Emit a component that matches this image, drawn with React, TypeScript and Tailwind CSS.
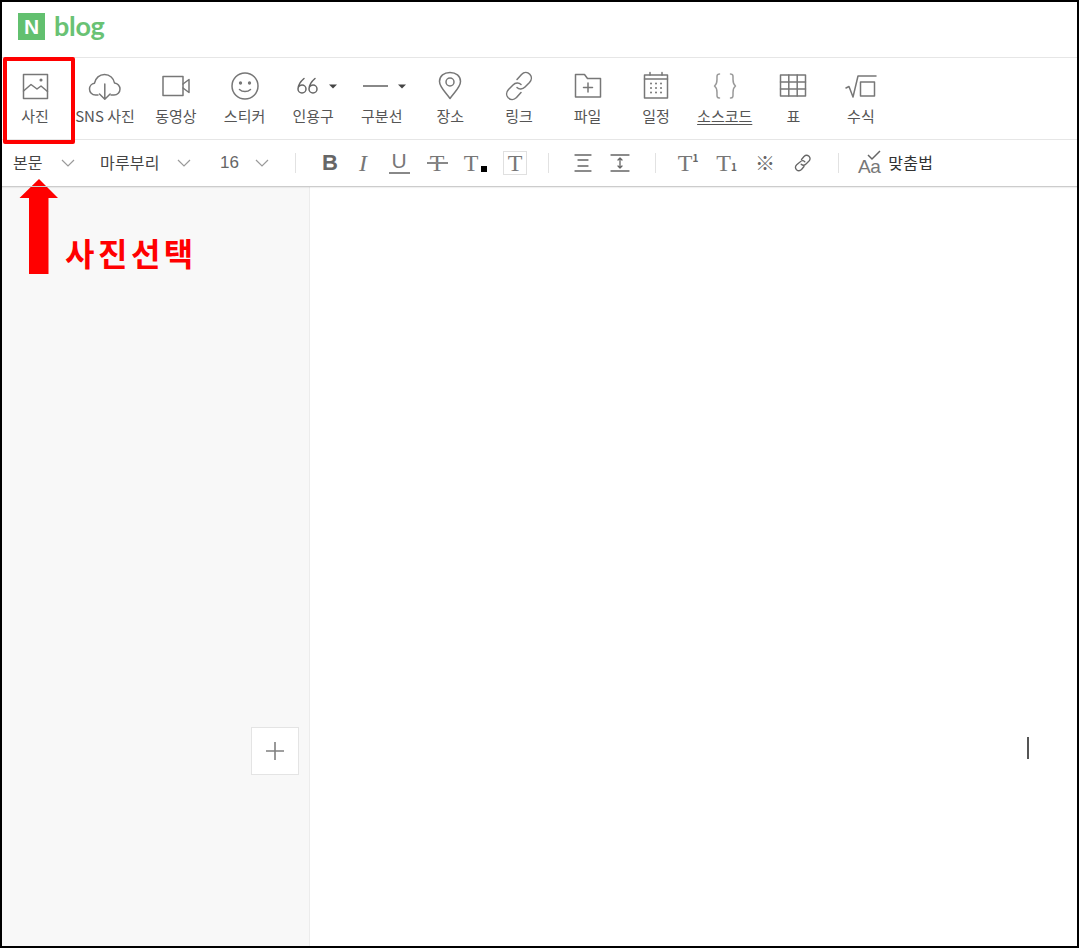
import type { ReactNode } from 'react'

const font = '[font-family:"Noto_Sans_CJK_KR","Noto_Sans",sans-serif]'

const Icon = ({ children, w = 30, h = 30 }: { children: ReactNode; w?: number; h?: number }) => (
  <svg
    width={w}
    height={h}
    viewBox={`0 0 ${w} ${h}`}
    fill="none"
    stroke="#777"
    strokeWidth="1.5"
    strokeLinecap="round"
    strokeLinejoin="round"
  >
    {children}
  </svg>
)

const Caret = () => (
  <svg width="8" height="5" viewBox="0 0 8 5">
    <path d="M0 0.5h8L4 4.5z" fill="#444" />
  </svg>
)

const Chevron = () => (
  <svg width="14" height="8" viewBox="0 0 14 8" fill="none" stroke="#9a9a9a" strokeWidth="1.2">
    <path d="M1 1l6 6 6-6" />
  </svg>
)

const tools: { label: string; icon: ReactNode; underline?: boolean; cls?: string }[] = [
  {
    label: '사진',
    cls: 'ml-[-1.3px]',
    icon: (
      <Icon>
        <rect x="3.5" y="3.5" width="24" height="24" />
        <path d="M3.5 20l7.5-6.5 6 4.5 4-3 6.5 5.5" />
        <circle cx="21" cy="9" r="0.8" fill="#777" />
      </Icon>
    ),
  },
  {
    label: 'SNS 사진',
    cls: 'ml-[1.4px]',
    icon: (
      <Icon w={34}>
        <path d="M10 24H7.500C4 24 1.500 21.300 1.500 18c0-3 2.200-5.400 5-5.800C7.500 7 11.500 3.500 16.500 3.500c5.300 0 9.300 3.800 10 8.500 3.200.2 5.500 3 5.500 6 0 3.300-2.500 6-6 6H23" />
        <path d="M16.800 13v15M11.500 23l5.300 5.300 5.300-5.300" />
      </Icon>
    ),
  },
  {
    label: '동영상',
    cls: 'ml-[2.4px]',
    icon: (
      <Icon w={30}>
        <rect x="2" y="5.500" width="20" height="19" />
        <path d="M22 13l6-4.500v13L22 17" />
      </Icon>
    ),
  },
  {
    label: '스티커',
    icon: (
      <Icon>
        <circle cx="15" cy="15" r="13" />
        <circle cx="10.500" cy="12" r="0.9" fill="#777" />
        <circle cx="19.500" cy="12" r="0.9" fill="#777" />
        <path d="M9.500 18.500c3 2.800 8 2.800 11 0" />
      </Icon>
    ),
  },
  {
    label: '인용구',
    icon: (
      <div className="ml-[6px] flex items-center gap-[11px]">
        <svg width="22" height="18" viewBox="0 0 22 18" fill="none" stroke="#666" strokeWidth="1.500" strokeLinecap="round">
          <path d="M8 1.500C4.500 4.500 2 8 2 12a4 4 0 1 0 4-4c-1.700 0-3 .8-3.500 2" />
          <path d="M19 1.500C15.500 4.500 13 8 13 12a4 4 0 1 0 4-4c-1.700 0-3 .8-3.500 2" />
        </svg>
        <Caret />
      </div>
    ),
  },
  {
    label: '구분선',
    icon: (
      <div className="ml-[5px] flex items-center gap-[10px]">
        <div className="h-[1.500px] w-[25px] bg-[#888]" />
        <Caret />
      </div>
    ),
  },
  {
    label: '장소',
    icon: (
      <Icon w={24}>
        <path d="M12 27.500C7 20.500 1.500 16 1.500 10.500 1.500 5 6 1.500 12 1.500S22.500 5 22.500 10.500C22.500 16 17 20.500 12 27.500z" />
        <circle cx="12" cy="11" r="4" />
      </Icon>
    ),
  },
  {
    label: '링크',
    icon: (
      <Icon w={28}>
        <path d="M12 8.500l4.500-5c2.500-2.500 6-2.500 8.300-.3 2.200 2.300 2 5.800-.3 8.300l-4.500 4.500c-2.500 2.500-6 2.500-8 .5" />
        <path d="M16 21.500l-4.500 5c-2.500 2.500-6 2.500-8.300.3-2.200-2.300-2-5.800.3-8.300L8 14c2.500-2.500 6-2.500 8-.5" />
      </Icon>
    ),
  },
  {
    label: '파일',
    icon: (
      <Icon w={28}>
        <path d="M1.500 26V3.500h9l3 4h13V26z" />
        <path d="M14 12v9M9.500 16.500h9" />
      </Icon>
    ),
  },
  {
    label: '일정',
    icon: (
      <Icon w={26}>
        <rect x="1.500" y="4" width="23" height="23" />
        <path d="M1.500 8h23M7 1.500V4M19 1.500V4" />
        <path
          d="M8 12.500h.01M13 12.500h.01M18 12.500h.01M8 17h.01M13 17h.01M18 17h.01M8 21.500h.01M13 21.500h.01M18 21.500h.01"
          strokeWidth="2"
        />
      </Icon>
    ),
  },
  {
    label: '소스코드',
    underline: true,
    icon: (
      <Icon w={24}>
        <path d="M6.500 3C3.500 3 4 5 4 8.500c0 3.500-.5 5-2.500 6.500 2 1.500 2.500 3 2.500 6.500S3.500 27 6.500 27" stroke="#999" />
        <path d="M17.500 3c3 0 2.500 2 2.500 5.500 0 3.500.5 5 2.500 6.500-2 1.500-2.500 3-2.500 6.500s.5 5.500-2.500 5.500" stroke="#999" />
      </Icon>
    ),
  },
  {
    label: '표',
    icon: (
      <Icon w={28}>
        <rect x="1.500" y="4" width="25" height="21" />
        <path d="M1.500 11h25M1.500 18h25M9.800 4v21M18.200 4v21" />
      </Icon>
    ),
  },
  {
    label: '수식',
    cls: 'ml-[-1px]',
    icon: (
      <Icon w={32}>
        <path d="M1 17l3-1.500 4 10.500L13 5h18" />
        <rect x="15.500" y="11" width="14" height="14" />
      </Icon>
    ),
  },
]

const Serif = ({ children, className = '' }: { children: ReactNode; className?: string }) => (
  <span className={`text-[24px] leading-none text-[#777] [font-family:'Liberation_Serif',serif] ${className}`}>
    {children}
  </span>
)

const Btn = ({ children, w = 38 }: { children: ReactNode; w?: number }) => (
  <div className="relative flex h-full shrink-0 items-center justify-center" style={{ width: w }}>
    {children}
  </div>
)

const Divider = () => <div className="h-[20px] w-px shrink-0 bg-[#e2e2e2]" />

export default function App() {
  return (
    <div className={`flex h-[948px] w-[1079px] flex-col overflow-hidden border-2 border-black bg-white ${font}`}>
      {/* logo */}
      <header className="flex h-[56px] shrink-0 items-start gap-[9px] border-b border-[#e6e6e6] pl-[16px] pt-[11px]">
        <div className="flex h-[27px] w-[27px] items-center justify-center bg-[#62c06f] text-[21px] font-black leading-none text-white [font-family:'Liberation_Sans',sans-serif]">
          N
        </div>
        <span className="mt-[-1px] text-[27px] font-bold leading-[27px] tracking-[-0.3px] text-[#69c274] [font-family:'Lato',sans-serif]">
          blog
        </span>
      </header>

      {/* insert tools */}
      <div className="flex h-[82px] shrink-0 border-b border-[#e6e6e6]">
        {tools.map((t) => (
          <div key={t.label} className={`flex w-[68.6px] shrink-0 flex-col items-center pt-[13px] ${t.cls ?? ''}`}>
            <div className="flex h-[30px] items-center justify-center">{t.icon}</div>
            <span
              className={`mt-[5px] whitespace-nowrap text-[15px] leading-[20px] text-[#555] ${t.underline ? 'underline underline-offset-2' : ''}`}
            >
              {t.label}
            </span>
          </div>
        ))}
      </div>

      {/* text format */}
      <div className="z-10 flex h-[47px] shrink-0 items-center border-b border-[#ccc] pl-[11px] shadow-[0_1px_1px_rgba(0,0,0,0.06)]">
        <span className="mt-[-2px] w-[48px] text-[16px] text-[#444]">본문</span>
        <Chevron />
        <span className="ml-[25px] mt-[-2px] w-[77px] text-[16px] tracking-[0.2px] text-[#444]">마루부리</span>
        <Chevron />
        <span className="ml-[29px] mt-[-1px] w-[35px] text-[17px] text-[#666] [font-family:'Liberation_Sans',sans-serif]">16</span>
        <Chevron />
        <div className="ml-[26px]">
          <Divider />
        </div>
        <div className="ml-[15px] flex h-full items-center">
          <Btn>
            <span className="text-[22px] font-bold leading-none text-[#666] [font-family:'Liberation_Sans',sans-serif]">B</span>
          </Btn>
          <Btn w={28}>
            <Serif className="italic">I</Serif>
          </Btn>
          <Btn w={44}>
            <div className="flex flex-col items-center">
              <span className="text-[21px] leading-[18px] text-[#777] [font-family:'Liberation_Sans',sans-serif]">U</span>
              <div className="mt-[2px] h-[1.500px] w-[21px] bg-[#888]" />
            </div>
          </Btn>
          <Btn w={32}>
            <Serif>T</Serif>
            <div className="absolute left-[6px] right-[5px] top-[22px] h-[1.500px] bg-[#888]" />
          </Btn>
          <Btn w={42}>
            <Serif className="mr-[6px]">T</Serif>
            <div className="absolute left-[28px] top-[26px] h-[6px] w-[6px] bg-black" />
          </Btn>
          <Btn w={40}>
            <div className="flex h-[24px] w-[24px] items-center justify-center border border-[#e0e0e0]">
              <Serif>T</Serif>
            </div>
          </Btn>
        </div>
        <div className="ml-[13px]">
          <Divider />
        </div>
        <div className="ml-[16px] flex h-full items-center">
          <Btn w={36}>
            <Icon w={20} h={20}>
              <path d="M2 2h16M5 7h10M5 13h10M2 18h16" strokeWidth="1.300" stroke="#666" />
            </Icon>
          </Btn>
          <Btn w={38}>
            <Icon w={20} h={20}>
              <path d="M1 2h18M1 18h18M10 5v10M8 7l2-2 2 2M8 13l2 2 2-2" strokeWidth="1.300" stroke="#666" />
            </Icon>
          </Btn>
        </div>
        <div className="ml-[16px]">
          <Divider />
        </div>
        <div className="ml-[13px] flex h-full items-center">
          <Btn w={38}>
            <Serif>T</Serif>
            <span className="mb-[10px] text-[10px] font-bold leading-none text-[#666]">1</span>
          </Btn>
          <Btn w={39}>
            <Serif>T</Serif>
            <span className="mt-[8px] text-[10px] font-bold leading-none text-[#666]">1</span>
          </Btn>
          <Btn w={38}>
            <span className="text-[20px] leading-none text-[#666]">※</span>
          </Btn>
          <Btn w={38}>
            <Icon w={18} h={18}>
              <path d="M7.500 5.500l2.500-3c1.500-1.500 3.500-1.500 5-.2 1.300 1.400 1.200 3.500-.2 5L12 10c-1.500 1.500-3.500 1.500-4.800.3" strokeWidth="1.300" stroke="#666" />
              <path d="M10 12.500l-2.500 3c-1.500 1.500-3.500 1.500-5 .2C1.200 14.300 1.300 12.200 2.700 10.700L6 8c1.500-1.500 3.500-1.500 4.800-.3" strokeWidth="1.300" stroke="#666" />
            </Icon>
          </Btn>
        </div>
        <div className="ml-[16px]">
          <Divider />
        </div>
        <div className="relative ml-[19px] flex items-center">
          <span className="mt-[6px] text-[19px] leading-none tracking-[-0.5px] text-[#777] [font-family:'Liberation_Sans',sans-serif]">
            Aa
          </span>
          <svg className="absolute left-[9px] top-[-1px]" width="14" height="11" viewBox="0 0 14 11" fill="none" stroke="#666" strokeWidth="1.500">
            <path d="M1 5l4 4 8-8" />
          </svg>
          <span className="ml-[8px] mt-[-2px] text-[16px] tracking-[0.3px] text-[#333]">맞춤법</span>
        </div>
      </div>

      {/* editor */}
      <div className="flex min-h-0 flex-1">
        <div className="relative w-[308px] shrink-0 border-r border-[#ececec] bg-[#f8f8f8]">
          <div className="absolute left-[249px] top-[540px] flex h-[48px] w-[48px] items-center justify-center border border-[#e4e4e4] bg-white">
            <svg width="18" height="18" viewBox="0 0 18 18" stroke="#808080" strokeWidth="1.600">
              <path d="M9 0v18M0 9h18" />
            </svg>
          </div>
        </div>
        <div className="relative flex-1">
          <div className="absolute left-[717px] top-[550px] h-[22px] w-[2px] bg-[#555]" />
        </div>
      </div>

      {/* red annotation */}
      <div className="absolute left-[3px] top-[57px] h-[87px] w-[72px] rounded-[2px] border-[4px] border-[#ff0000]" />
      <svg className="absolute left-[19px] top-[179px]" width="40" height="95" viewBox="0 0 40 95">
        <path d="M20 0L39 19H29.500V95H10V19H0.500z" fill="#ff0000" />
      </svg>
      <span className="absolute left-[65px] top-[230px] text-[32px] font-bold leading-[44px] tracking-[3.5px] text-[#ff0000]">
        사진선택
      </span>
    </div>
  )
}
